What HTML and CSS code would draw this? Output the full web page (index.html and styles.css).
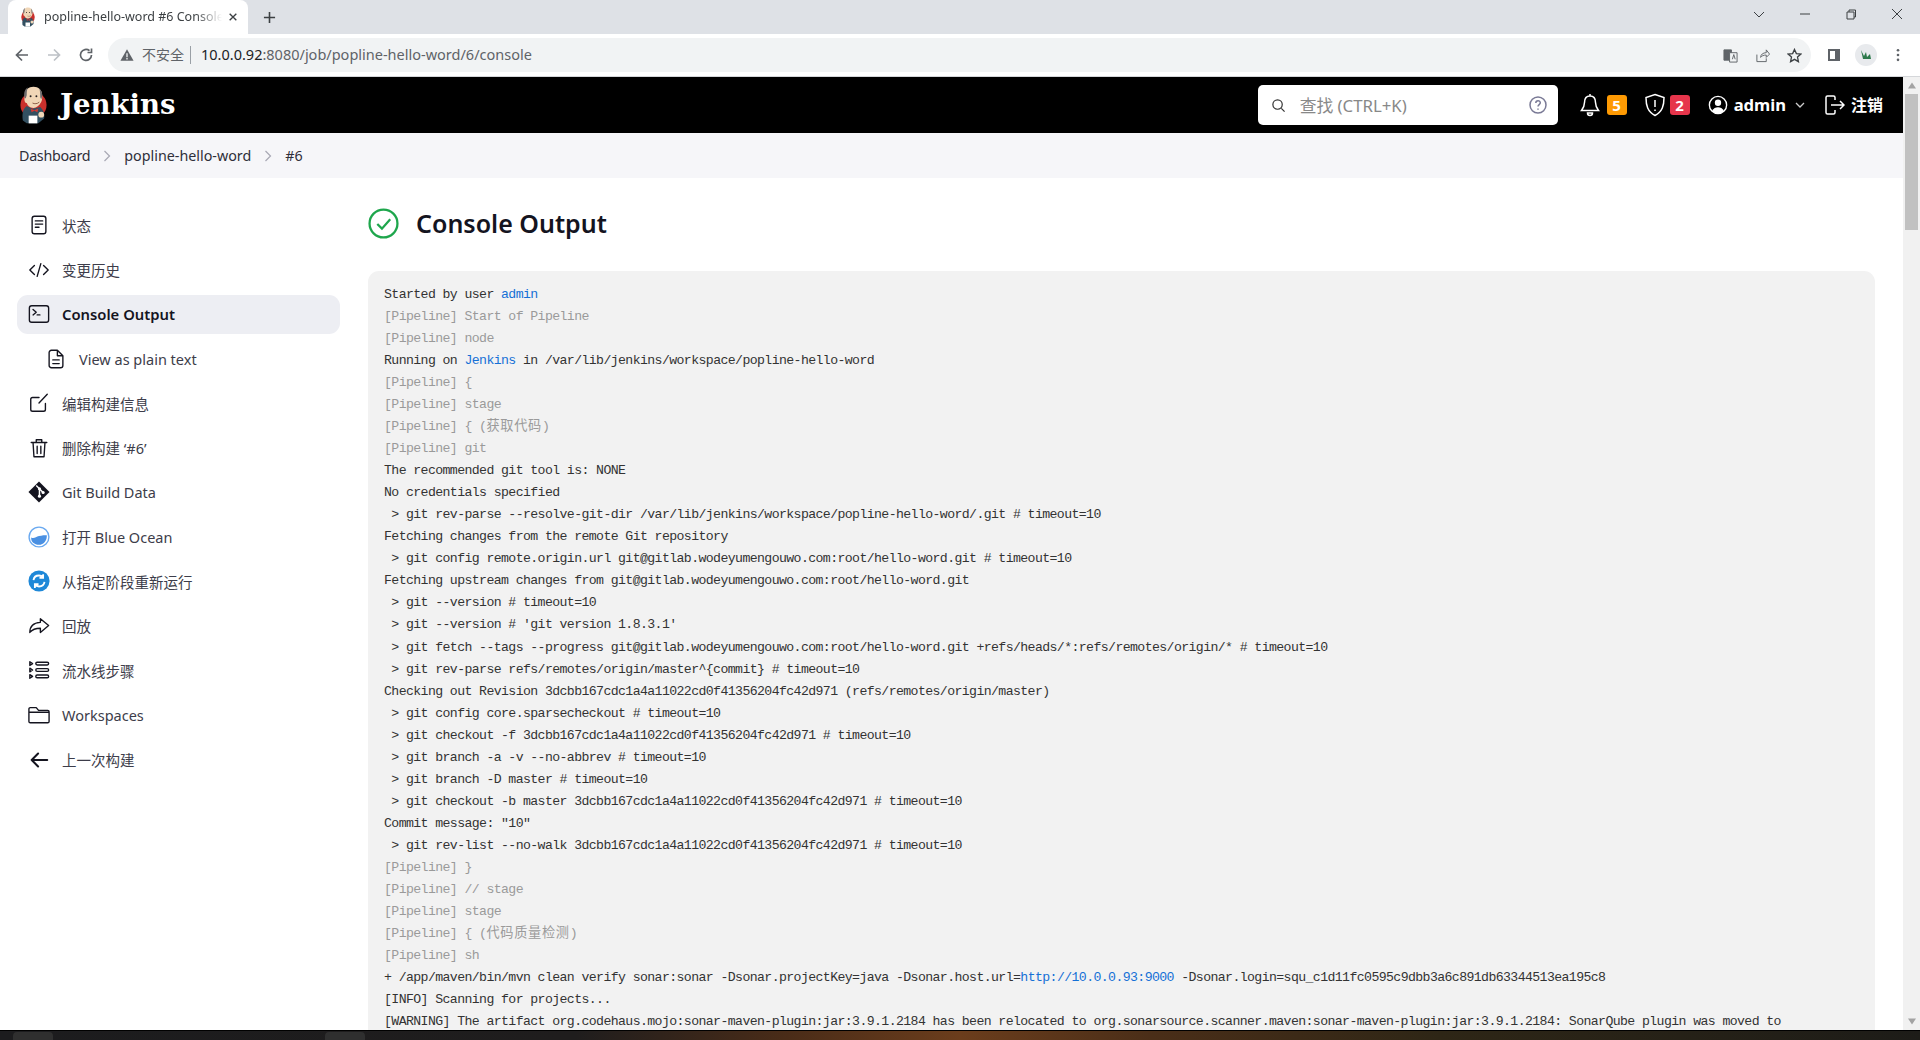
FILE: index.html
```html
<!DOCTYPE html>
<html lang="zh">
<head>
<meta charset="utf-8">
<title>popline-hello-word #6 Console Output</title>
<link rel="stylesheet" href="styles.css">
</head>
<body>
<svg class="defs" width="0" height="0">
  <symbol id="butler" viewBox="0 0 30 40">
    <circle cx="15" cy="20" r="13.500" fill="#c9302c"/>
    <path d="M4 36c-1-7 0-12 4-15l6 3 8-2c3 3 5 7 4 12l-6 5H8z" fill="#335061"/>
    <path d="M12 24l4 1.500 4-2-1 4-3-1.500-3 1.500z" fill="#d33833"/>
    <path d="M6 11C6 4 10 1 15 1s9 3 9 9c0 3 0 5-1 7-2 4-5 6-8 6-4 0-6-2-7-5-2 0-3-3-2-7z" fill="#f0d6b7"/>
    <path d="M6 13C4 7 7 3 9 2c-1 3-1 6-1 8l-1 3zM23 14c2-4 1-8-2-11 1 3 1 7 1 9z" fill="#6d6b6d"/>
    <path d="M14 18c2 1 5 1 7-1" fill="none" stroke="#8a5a44" stroke-width="1"/>
    <circle cx="18" cy="11" r="1" fill="#231f20"/>
    <circle cx="12" cy="11" r="1" fill="#231f20"/>
    <path d="M10 31h9v8h-9z" fill="#fff"/>
    <circle cx="23" cy="30" r="3" fill="#f0d6b7"/>
  </symbol>
</svg>

<div class="tabstrip">
  <div class="tab">
    <svg class="favicon"><use href="#butler"/></svg>
    <span class="tab-title">popline-hello-word #6 Console Output</span>
    <svg class="tab-close" viewBox="0 0 12 12"><path d="M2 2l8 8M10 2l-8 8"/></svg>
  </div>
  <svg class="tab-new" viewBox="0 0 14 14"><path d="M7 1v12M1 7h12"/></svg>
  <div class="win-controls">
    <svg viewBox="0 0 12 12"><path d="M1 4l5 5 5-5"/></svg>
    <svg viewBox="0 0 12 12"><path d="M1 6h10"/></svg>
    <svg viewBox="0 0 12 12"><path d="M2 4h7v7H2zM4 4V2h6.500v7H9"/></svg>
    <svg viewBox="0 0 12 12"><path d="M1 1l10 10M11 1L1 11"/></svg>
  </div>
</div>

<div class="toolbar">
  <svg class="nav-icon" viewBox="0 0 16 16"><path d="M14 8H3M8 2.500L2.500 8 8 13.500"/></svg>
  <svg class="nav-icon nav-off" viewBox="0 0 16 16"><path d="M2 8h11M8 2.500L13.500 8 8 13.500"/></svg>
  <svg class="nav-icon" viewBox="0 0 16 16"><path d="M13.500 8A5.500 5.500 0 1 1 11.500 3.700M13.500 1.500v4h-4"/></svg>
  <div class="omnibox">
    <svg class="warn" viewBox="0 0 16 16"><path d="M8 1.500L15.500 14.500H.5z" fill="#5f6368"/><path d="M8 6v4.500M8 11.500v1.500" stroke="#f1f3f4" stroke-width="1.500"/></svg>
    <span class="insecure">不安全</span>
    <span class="omni-sep"></span>
    <span class="url"><b>10.0.0.92</b>:8080/job/popline-hello-word/6/console</span>
    <div class="omni-actions">
      <svg viewBox="0 0 16 16"><path d="M1 2h8v11H1z" fill="#5f6368" stroke="#5f6368"/><path d="M7 5h8v10H7z" fill="#f1f3f4" stroke="#5f6368"/><path d="M10 12l1.500-5 1.500 5" stroke="#5f6368" fill="none"/></svg>
      <svg viewBox="0 0 16 16"><path d="M2 7v7.500h10V11M6 10c0-3 2.500-5 6-5V2l3.500 4.500L12 10V7.500c-3 0-5 1-6 2.500z" fill="none" stroke="#5f6368"/></svg>
      <svg viewBox="0 0 16 16"><path d="M8 1.500l2 4.500 4.800.5-3.600 3.200 1 4.800L8 12.100l-4.200 2.400 1-4.800L1.200 6.500 6 6z" fill="none" stroke="#3c4043" stroke-width="1.400"/></svg>
    </div>
  </div>
  <svg class="panel" viewBox="0 0 16 16"><path d="M2 2h12v12H2z" fill="#5f6368"/><path d="M4 4h5v8H4z" fill="#fff"/></svg>
  <div class="avatar"><svg viewBox="0 0 22 22"><circle cx="11" cy="11" r="11" fill="#e8eaed"/><path d="M6 6l3 6 2-4 1 5 3-3 1 5H8z" fill="#2d7a4b"/></svg></div>
  <svg class="dots" viewBox="0 0 4 16"><circle cx="2" cy="2.500" r="1.500"/><circle cx="2" cy="8" r="1.500"/><circle cx="2" cy="13.500" r="1.500"/></svg>
</div>

<div class="viewport">
  <div class="page">
    <header class="jk-header">
      <svg class="jk-logo"><use href="#butler"/></svg>
      <span class="jk-name">Jenkins</span>
      <div class="search">
        <svg class="search-icon" viewBox="0 0 16 16"><circle cx="7" cy="7" r="5"/><path d="M11 11l3.500 3.500"/></svg>
        <span class="search-text">查找 (CTRL+K)</span>
        <svg class="search-help" viewBox="0 0 18 18"><circle cx="9" cy="9" r="8"/><path d="M6.800 7c0-3 4.500-3 4.500-.2 0 1.800-2.300 1.800-2.300 3.700M9 12.500v1.200"/></svg>
      </div>
      <div class="hd-actions">
        <div class="hd-group hd-bell">
          <svg class="hd-icon" viewBox="0 0 20 24"><path d="M10 3c-4 0-5.500 3-5.500 6.500 0 4-1.500 6-3 8h17c-1.500-2-3-4-3-8C15.500 6 14 3 10 3zM10 1v2M7.500 20a2.500 2.500 0 0 0 5 0z"/></svg>
          <span class="badge badge-warn">5</span>
        </div>
        <div class="hd-group">
          <svg class="hd-icon" viewBox="0 0 20 24"><path d="M10 1.500l9 3c0 8-1.500 14-9 18-7.500-4-9-10-9-18zM10 7v7M10 16.500v1.500"/></svg>
          <span class="badge badge-err">2</span>
        </div>
        <div class="hd-user">
          <svg class="hd-icon user-icon" viewBox="0 0 22 22"><circle cx="11" cy="11" r="9.500"/><circle class="solid" cx="11" cy="8.500" r="3.500"/><path class="solid" d="M4.500 17.500c1.500-3 4-4 6.500-4s5 1 6.500 4c-3 3.500-10 3.500-13 0z"/></svg>
          <span class="hd-label">admin</span>
          <svg class="hd-chev" viewBox="0 0 10 6"><path d="M1 1l4 4 4-4"/></svg>
        </div>
        <div class="hd-logout">
          <svg class="hd-icon logout" viewBox="0 0 20 20"><path d="M10 5V2.500a1.500 1.500 0 0 0-1.500-1.500h-6A1.500 1.500 0 0 0 1 2.500v15A1.500 1.500 0 0 0 2.500 19h6a1.500 1.500 0 0 0 1.500-1.500V15M6 10h13M15 6l4 4-4 4"/></svg>
          <span class="hd-label">注销</span>
        </div>
      </div>
    </header>

    <nav class="breadcrumb">
      <span>Dashboard</span>
      <svg viewBox="0 0 8 12"><path d="M1.500 1l5 5-5 5"/></svg>
      <span>popline-hello-word</span>
      <svg viewBox="0 0 8 12"><path d="M1.500 1l5 5-5 5"/></svg>
      <span>#6</span>
    </nav>

    <div class="layout">
      <aside class="sidebar">
        <a class="item"><svg class="ic line" viewBox="0 0 24 24"><rect x="4.500" y="2.500" width="15" height="19" rx="2.500"/><path d="M8 7.500h8M8 11h8M8 14.500h4"/></svg><span>状态</span></a>
        <a class="item"><svg class="ic line" viewBox="0 0 24 24"><path d="M7 7l-5 5 5 5M17 7l5 5-5 5M14 5l-4 14"/></svg><span>变更历史</span></a>
        <a class="item active"><svg class="ic line" viewBox="0 0 24 24"><rect x="1.500" y="3" width="21" height="18" rx="2.500"/><path d="M5.500 7l3.500 3-3.500 3M10 13h3"/></svg><span>Console Output</span></a>
        <a class="item sub"><svg class="ic line" viewBox="0 0 24 24"><path d="M13.500 2.500H7A2.500 2.500 0 0 0 4.500 5v14A2.500 2.500 0 0 0 7 21.500h10a2.500 2.500 0 0 0 2.500-2.500V8.500zM13.500 2.500v6h6M8.500 13h7M8.500 17h7"/></svg><span>View as plain text</span></a>
        <a class="item"><svg class="ic line" viewBox="0 0 24 24"><path d="M19 12.500V19a2 2 0 0 1-2 2H5a2 2 0 0 1-2-2V8a2 2 0 0 1 2-2h7M12 12l9-9.500"/></svg><span>编辑构建信息</span></a>
        <a class="item"><svg class="ic line" viewBox="0 0 24 24"><path d="M3.500 6h17M9 6V3h6v3M5.500 6l1 15.500h11l1-15.500M10 10v8M14 10v8"/></svg><span>删除构建 ‘#6’</span></a>
        <a class="item"><svg class="ic" viewBox="0 0 24 24"><path d="M12 .5L23.500 12 12 23.500.5 12z" fill="#14141f"/><path d="M9 5l3.500 3.500v8M12.500 8.500l4 4" stroke="#fff" stroke-width="1.600" fill="none"/><circle cx="12.500" cy="8.500" r="1.700" fill="#fff"/><circle cx="12.500" cy="16.500" r="1.700" fill="#fff"/><circle cx="16.500" cy="12.500" r="1.700" fill="#fff"/></svg><span>Git Build Data</span></a>
        <a class="item"><svg class="ic" viewBox="0 0 24 24"><circle cx="12" cy="12" r="10.800" fill="#fff" stroke="#6aa9f0" stroke-width="1.500"/><path d="M3.500 12.500c3 1.500 5-.5 8.500-1.500s6-1 8.500-1c.5 5.500-3.500 10.500-8.500 10.500S3 17 3.500 12.500z" fill="#4a90e2"/></svg><span>打开 Blue Ocean</span></a>
        <a class="item"><svg class="ic" viewBox="0 0 24 24"><circle cx="12" cy="12" r="11.500" fill="#1e88d8"/><path d="M6 11c.5-3.500 3-5 6-5 2 0 3.500.8 4.500 2M16.500 4.500v4h-4M18 13c-.5 3.500-3 5-6 5-2 0-3.500-.8-4.500-2M7.500 19.500v-4h4" stroke="#fff" stroke-width="2" fill="none"/></svg><span>从指定阶段重新运行</span></a>
        <a class="item"><svg class="ic line" viewBox="0 0 24 24"><path d="M13.500 4l9 7.500-9 7.500v-4.500c-5 0-8.500 1-11.500 4.500 0-6 3.500-10.500 11.500-11z"/></svg><span>回放</span></a>
        <a class="item"><svg class="ic line" viewBox="0 0 24 24"><rect x="8.500" y="3.500" width="14" height="3" rx="1.500"/><rect x="8.500" y="10.500" width="14" height="3" rx="1.500"/><rect x="8.500" y="17.500" width="14" height="3" rx="1.500"/><path d="M2 3l3 2-3 2zM2 10l3 2-3 2zM2 17l3 2-3 2z"/></svg><span>流水线步骤</span></a>
        <a class="item"><svg class="ic line" viewBox="0 0 24 24"><path d="M2.500 4H9l2.500 3H21.500a1.500 1.500 0 0 1 1.500 1.500V19a1.500 1.500 0 0 1-1.500 1.500h-19A1.500 1.500 0 0 1 1 19V5.500A1.500 1.500 0 0 1 2.500 4zM1 9h22"/></svg><span>Workspaces</span></a>
        <a class="item"><svg class="ic line arrow" viewBox="0 0 24 24"><path d="M21 12H4M11 5l-7 7 7 7"/></svg><span>上一次构建</span></a>
      </aside>

      <main class="main">
        <h1 class="title">
          <svg class="title-icon" viewBox="0 0 30 30"><circle cx="15" cy="15" r="13.500"/><path d="M9 15.500l4.500 4.500L21.500 11"/></svg>
          <span>Console Output</span>
        </h1>
<pre class="console">Started by user <a>admin</a>
<i>[Pipeline] Start of Pipeline</i>
<i>[Pipeline] node</i>
Running on <a>Jenkins</a> in /var/lib/jenkins/workspace/popline-hello-word
<i>[Pipeline] {</i>
<i>[Pipeline] stage</i>
<i>[Pipeline] { (<span class="cjk">获取代码</span>)</i>
<i>[Pipeline] git</i>
The recommended git tool is: NONE
No credentials specified
 &gt; git rev-parse --resolve-git-dir /var/lib/jenkins/workspace/popline-hello-word/.git # timeout=10
Fetching changes from the remote Git repository
 &gt; git config remote.origin.url git@gitlab.wodeyumengouwo.com:root/hello-word.git # timeout=10
Fetching upstream changes from git@gitlab.wodeyumengouwo.com:root/hello-word.git
 &gt; git --version # timeout=10
 &gt; git --version # 'git version 1.8.3.1'
 &gt; git fetch --tags --progress git@gitlab.wodeyumengouwo.com:root/hello-word.git +refs/heads/*:refs/remotes/origin/* # timeout=10
 &gt; git rev-parse refs/remotes/origin/master^{commit} # timeout=10
Checking out Revision 3dcbb167cdc1a4a11022cd0f41356204fc42d971 (refs/remotes/origin/master)
 &gt; git config core.sparsecheckout # timeout=10
 &gt; git checkout -f 3dcbb167cdc1a4a11022cd0f41356204fc42d971 # timeout=10
 &gt; git branch -a -v --no-abbrev # timeout=10
 &gt; git branch -D master # timeout=10
 &gt; git checkout -b master 3dcbb167cdc1a4a11022cd0f41356204fc42d971 # timeout=10
Commit message: "10"
 &gt; git rev-list --no-walk 3dcbb167cdc1a4a11022cd0f41356204fc42d971 # timeout=10
<i>[Pipeline] }</i>
<i>[Pipeline] // stage</i>
<i>[Pipeline] stage</i>
<i>[Pipeline] { (<span class="cjk">代码质量检测</span>)</i>
<i>[Pipeline] sh</i>
+ /app/maven/bin/mvn clean verify sonar:sonar -Dsonar.projectKey=java -Dsonar.host.url=<a>http://10.0.0.93:9000</a> -Dsonar.login=squ_c1d11fc0595c9dbb3a6c891db63344513ea195c8
[INFO] Scanning for projects...
[WARNING] The artifact org.codehaus.mojo:sonar-maven-plugin:jar:3.9.1.2184 has been relocated to org.sonarsource.scanner.maven:sonar-maven-plugin:jar:3.9.1.2184: SonarQube plugin was moved to
</pre>
      </main>
    </div>
  </div>

  <div class="scrollbar">
    <svg class="sb-arrow" viewBox="0 0 8 6"><path d="M4 0l4 6H0z"/></svg>
    <div class="sb-track"><div class="sb-thumb"></div></div>
    <svg class="sb-arrow" viewBox="0 0 8 6"><path d="M0 0h8L4 6z"/></svg>
  </div>
</div>

<div class="taskbar">
  <span class="task-btn"></span>
  <span class="task-btn task-btn2"></span>
</div>
</body>
</html>
```
FILE: styles.css
```css
* { box-sizing: border-box; }
html, body { margin: 0; height: 100%; overflow: hidden; }
body {
  display: flex;
  flex-direction: column;
  height: 1040px;
  font-family: "Noto Sans", "Noto Sans CJK SC", sans-serif;
  background: #fff;
  color: #14141f;
}
.defs { position: absolute; }

/* browser chrome */
.tabstrip {
  flex: 0 0 34px;
  background: #dee1e6;
  display: flex;
  align-items: center;
  padding-left: 8px;
}
.tab {
  width: 240px;
  height: 34px;
  background: #fff;
  border-radius: 8px 8px 0 0;
  display: flex;
  align-items: center;
  padding: 0 10px 0 12px;
}
.favicon { width: 16px; height: 20px; flex: none; margin-right: 8px; }
.tab-title {
  flex: 1;
  font: 12.5px/16px "Noto Sans", sans-serif;
  color: #3c4043;
  white-space: nowrap;
  overflow: hidden;
  -webkit-mask-image: linear-gradient(90deg, #000 85%, transparent);
  mask-image: linear-gradient(90deg, #000 85%, transparent);
}
.tab-close { width: 10px; height: 10px; margin-left: 6px; flex: none; }
.tab-close path { stroke: #3c4043; stroke-width: 1.600; fill: none; }
.tab-new { width: 13px; height: 13px; margin-left: 15px; }
.tab-new path { stroke: #3c4043; stroke-width: 1.700; fill: none; }
.win-controls {
  margin-left: auto;
  display: flex;
  align-items: center;
  gap: 34px;
  padding-right: 17px;
  height: 100%;
}
.win-controls svg { width: 12px; height: 12px; margin-bottom: 6px; }
.win-controls path { stroke: #3c4043; stroke-width: 1; fill: none; }

.toolbar {
  flex: 0 0 43px;
  display: flex;
  align-items: center;
  background: #fff;
  border-bottom: 1px solid #d5d7da;
  padding-left: 14px;
}
.nav-icon { width: 16px; height: 16px; margin-right: 16px; flex: none; }
.nav-icon path { stroke: #5f6368; stroke-width: 1.700; fill: none; }
.nav-off path { stroke: #bdc1c6; }
.omnibox {
  width: 1703px;
  height: 34px;
  margin-left: -2px;
  border-radius: 17px;
  background: #f1f3f4;
  display: flex;
  align-items: center;
  padding: 0 7px 0 12px;
  font: 14px/20px "Noto Sans", "Noto Sans CJK SC", sans-serif;
  color: #5f6368;
}
.warn { width: 14px; height: 14px; margin-right: 8px; }
.insecure { font-size: 14px; padding-bottom: 1px; }
.omni-sep { width: 1px; height: 18px; background: #9aa0a6; margin: 0 10px 0 6px; }
.url { font-size: 14.500px; padding-bottom: 2px; }
.url b { font-weight: 400; color: #202124; }
.omni-actions { margin-left: auto; display: flex; gap: 17px; align-items: center; padding-right: 2px; }
.omni-actions svg { width: 15px; height: 15px; }
.panel { width: 16px; height: 16px; margin-left: 15px; flex: none; }
.avatar { width: 22px; height: 22px; margin-left: 13px; flex: none; }
.avatar svg { width: 22px; height: 22px; display: block; }
.dots { width: 4px; height: 14px; margin-left: 19px; flex: none; fill: #5f6368; }

/* page */
.viewport { flex: 1; display: flex; min-height: 0; }
.page { flex: 1; min-width: 0; overflow: hidden; display: flex; flex-direction: column; }

.jk-header {
  flex: 0 0 56px;
  background: #000;
  display: flex;
  align-items: center;
  padding-left: 19px;
  color: #fff;
}
.jk-logo { width: 29px; height: 40px; flex: none; }
.jk-name {
  margin: -2px 0 0 12px;
  font: 700 27.500px/36px "DejaVu Serif", serif;
}
.search {
  margin-left: auto;
  width: 300px;
  height: 40px;
  background: #fff;
  border-radius: 5px;
  display: flex;
  align-items: center;
  padding: 0 11px 0 13px;
}
.search-icon { width: 15px; height: 15px; margin-right: 14px; }
.search-icon circle, .search-icon path { stroke: #333; stroke-width: 1.300; fill: none; }
.search-text { font-size: 16.800px; color: #888; }
.search-help { width: 18px; height: 18px; margin-left: auto; }
.search-help circle, .search-help path { stroke: #7a7a96; stroke-width: 1.500; fill: none; }
.hd-actions { display: flex; align-items: center; padding-right: 20px; margin-left: 22px; }
.hd-group { display: flex; align-items: center; gap: 5px; margin-right: 18px; }
.hd-bell { gap: 7px; }
.hd-icon { width: 20px; height: 24px; }
.hd-icon path, .hd-icon circle { stroke: #fff; stroke-width: 1.500; fill: none; }
.badge {
  width: 20px;
  height: 20px;
  border-radius: 3px;
  text-align: center;
  font: 700 15px/20px "Noto Sans", sans-serif;
  color: #fff;
}
.badge-warn { background: #fe9a03; }
.badge-err { background: #e6354b; }
.hd-user { display: flex; align-items: center; margin-right: 20px; }
.user-icon { width: 20px; height: 20px; margin-right: 6px; }
.hd-icon .solid { fill: #fff; stroke: none; }
.hd-label { font: 700 16.600px/22px "Noto Sans", "Noto Sans CJK SC", sans-serif; }
.hd-chev { width: 10px; height: 6px; margin-left: 9px; }
.hd-chev path { stroke: #ccc; stroke-width: 1.300; fill: none; }
.hd-logout { display: flex; align-items: center; gap: 6px; }
.hd-logout .hd-label { font-size: 16px; }
.logout { width: 20px; height: 20px; }

.breadcrumb {
  flex: 0 0 45px;
  background: #f6f6f9;
  display: flex;
  align-items: center;
  padding-left: 19px;
  font-size: 14.300px;
  color: #2f2f3a;
}
.breadcrumb span:first-child { letter-spacing: -0.3px; }
.breadcrumb svg { width: 8px; height: 12px; margin: 0 13px; }
.breadcrumb path { stroke: #a8a8b4; stroke-width: 1.200; fill: none; }

.layout { flex: 1; min-height: 0; display: flex; overflow: hidden; }
.sidebar {
  flex: 0 0 368px;
  padding: 27.500px 28px 0 17px;
  display: flex;
  flex-direction: column;
  gap: 5.550px;
}
.item {
  flex: 0 0 39px;
  display: flex;
  align-items: center;
  padding-left: 11px;
  font-size: 14.500px;
  color: #3d3d4a;
  border-radius: 11px;
}
.item .ic { width: 22px; height: 22px; margin-right: 12px; flex: none; }
.line path, .line rect { stroke: #14141f; stroke-width: 1.500; fill: none; stroke-linecap: round; stroke-linejoin: round; }
.item.active { background: #edeef3; color: #14141f; font-weight: 600; font-size: 14.800px; }
.item.sub { padding-left: 28px; }
.arrow path { stroke-width: 2.200; }

.main {
  flex: 1;
  min-width: 0;
  padding: 30px 28px 0 0;
  display: flex;
  flex-direction: column;
}
.title {
  display: flex;
  align-items: center;
  margin: 0 0 33px;
  height: 30px;
  font-size: 25px;
  font-weight: 600;
  color: #14141f;
}
.title-icon { width: 31px; height: 31px; margin-right: 17px; flex: none; }
.title-icon circle, .title-icon path { stroke: #1ea64c; stroke-width: 2.200; fill: none; }
.console {
  margin: 0;
  flex: 1;
  background: #f2f2f2;
  border-radius: 11px 11px 0 0;
  padding: 13px 16px 0;
  font: 13.200px/22.030px "Liberation Mono", "Noto Sans CJK SC", monospace;
  letter-spacing: -0.600px;
  color: #333;
  white-space: pre;
  overflow: hidden;
}
.console i { font-style: normal; color: #9a9a9a; }
.console a { color: #1570d6; }
.console .cjk { letter-spacing: .7px; }

.scrollbar {
  flex: 0 0 17px;
  background: #f1f1f1;
  display: flex;
  flex-direction: column;
  align-items: center;
}
.sb-arrow { flex: 0 0 17px; width: 8px; height: 6px; fill: #a3a3a3; padding: 0; }
.sb-track { flex: 1; width: 100%; padding: 0 2px; }
.sb-thumb { height: 136px; background: #c1c1c1; }

.taskbar {
  flex: 0 0 9px;
  border-top: 1px solid #000;
  display: flex;
  align-items: flex-start;
  padding: 1px 0 0 13px;
  background: linear-gradient(90deg, #1c1c1e 0%, #1f1d1d 30%, #4a2c18 41%, #6b3d1c 50%, #4a2e18 60%, #2e2616 75%, #1d1c18 100%);
}
.task-btn { width: 40px; height: 8px; border-radius: 4px 4px 0 0; background: #2f2f2f; }
.task-btn2 { margin-left: 272px; }
```
